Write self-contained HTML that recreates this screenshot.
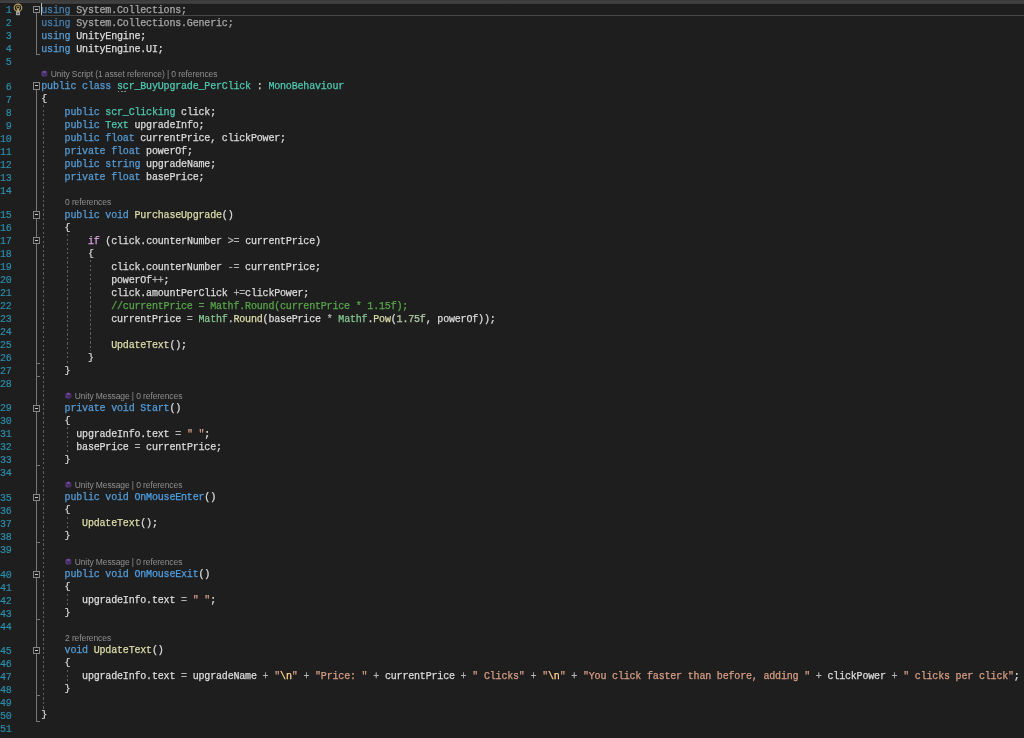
<!DOCTYPE html>
<html><head><meta charset="utf-8"><title>scr_BuyUpgrade_PerClick.cs</title>
<style>
html,body{margin:0;padding:0;background:#1e1e1e;overflow:hidden}
body{width:1024px;height:738px;position:relative;font-family:"Liberation Mono",monospace}
.l,.n{position:absolute;white-space:pre;font-size:10.0px;line-height:13.0px;height:13.0px;letter-spacing:-0.1785px;font-family:"Liberation Mono",monospace}
.l{left:41.3px;color:#dcdcdc;-webkit-text-stroke:0.25px}
.n{left:0;width:11.7px;text-align:right;color:#2b91af;-webkit-text-stroke:0.15px}
.k{color:#569cd6}.t{color:#4ec9b0}.m{color:#dcdcaa}.c{color:#d8a0df}.s{color:#d69d85}.e{color:#ffd68f}
.nn{color:#b5cea8}.o{color:#b4b4b4}.cm{color:#57a64a}.st{color:#86c691}.u{color:#4f9fe3}.f{color:#a8a8a8}.fk{color:#477fae}
.cl{position:absolute;white-space:pre;font-family:"Liberation Sans",sans-serif;font-size:8.5px;line-height:11.6px;height:11.6px;color:#8f8f8f;letter-spacing:-0.1px}
.g{position:absolute;width:1px;background:repeating-linear-gradient(to bottom,#5e5e5e 0,#5e5e5e 2.4px,transparent 2.4px,transparent 4.52px)}
.v{position:absolute;background:#767676;width:1px}
.h{position:absolute;background:#767676;height:1px}
.b{position:absolute;width:5.1px;height:5.3px;border:1px solid #858585;background:#1e1e1e;box-sizing:content-box}
.b i{position:absolute;left:0.8px;top:2.15px;width:3.5px;height:1px;background:#c8c8c8}

</style></head><body><div id="w" style="position:absolute;left:0;top:0;width:1024px;height:738px;filter:blur(0.3px)">
<div style="position:absolute;left:0;top:0;width:1024px;height:3.1px;background:linear-gradient(#393939,#434343)"></div>
<div style="position:absolute;left:41px;top:2.9px;width:983px;height:10.8px;border-top:1px solid #3a3a3a;border-bottom:1.2px solid #484848"></div>
<div style="position:absolute;left:41px;top:3.2px;width:1.1px;height:12px;background:#bcbcbc"></div>
<div class="n" style="top:4.10px">1</div>
<div class="l" style="top:3.60px"><span class="fk">using</span><span class="f"> System.Collections;</span></div>
<div class="n" style="top:17.10px">2</div>
<div class="l" style="top:16.60px"><span class="fk">using</span><span class="f"> System.Collections.Generic;</span></div>
<div class="n" style="top:30.10px">3</div>
<div class="l" style="top:29.60px"><span class="k">using</span> UnityEngine;</div>
<div class="n" style="top:43.10px">4</div>
<div class="l" style="top:42.60px"><span class="k">using</span> UnityEngine.UI;</div>
<div class="n" style="top:56.10px">5</div>
<div class="n" style="top:80.50px">6</div>
<div class="l" style="top:80.00px"><span class="k">public class </span><span class="t">scr_BuyUpgrade_PerClick</span> : <span class="t">MonoBehaviour</span></div>
<div class="n" style="top:93.50px">7</div>
<div class="l" style="top:93.00px"><span style="display:inline-block;transform:translateY(-0.45px) scaleY(0.94)">{</span></div>
<div class="n" style="top:106.50px">8</div>
<div class="l" style="top:106.00px">    <span class="k">public </span><span class="t">scr_Clicking</span> click;</div>
<div class="n" style="top:119.50px">9</div>
<div class="l" style="top:119.00px">    <span class="k">public </span><span class="t">Text</span> upgradeInfo;</div>
<div class="n" style="top:132.50px">10</div>
<div class="l" style="top:132.00px">    <span class="k">public float</span> currentPrice, clickPower;</div>
<div class="n" style="top:145.50px">11</div>
<div class="l" style="top:145.00px">    <span class="k">private float</span> powerOf;</div>
<div class="n" style="top:158.50px">12</div>
<div class="l" style="top:158.00px">    <span class="k">public string</span> upgradeName;</div>
<div class="n" style="top:171.50px">13</div>
<div class="l" style="top:171.00px">    <span class="k">private float</span> basePrice;</div>
<div class="n" style="top:184.50px">14</div>
<div class="n" style="top:209.30px">15</div>
<div class="l" style="top:208.80px">    <span class="k">public void </span><span class="m">PurchaseUpgrade</span>()</div>
<div class="n" style="top:222.30px">16</div>
<div class="l" style="top:221.80px">    <span style="display:inline-block;transform:translateY(-0.45px) scaleY(0.94)">{</span></div>
<div class="n" style="top:235.30px">17</div>
<div class="l" style="top:234.80px">        <span class="c">if</span> (click.counterNumber <span class="o">&gt;=</span> currentPrice)</div>
<div class="n" style="top:248.30px">18</div>
<div class="l" style="top:247.80px">        <span style="display:inline-block;transform:translateY(-0.45px) scaleY(0.94)">{</span></div>
<div class="n" style="top:261.30px">19</div>
<div class="l" style="top:260.80px">            click.counterNumber <span class="o">-=</span> currentPrice;</div>
<div class="n" style="top:274.30px">20</div>
<div class="l" style="top:273.80px">            powerOf<span class="o">++</span>;</div>
<div class="n" style="top:287.30px">21</div>
<div class="l" style="top:286.80px">            click.amountPerClick <span class="o">+=</span>clickPower;</div>
<div class="n" style="top:300.30px">22</div>
<div class="l" style="top:299.80px">            <span class="cm">//currentPrice = Mathf.Round(currentPrice * 1.15f);</span></div>
<div class="n" style="top:313.30px">23</div>
<div class="l" style="top:312.80px">            currentPrice <span class="o">=</span> <span class="st">Mathf</span>.<span class="m">Round</span>(basePrice <span class="o">*</span> <span class="st">Mathf</span>.<span class="m">Pow</span>(<span class="nn">1.75f</span>, powerOf));</div>
<div class="n" style="top:326.30px">24</div>
<div class="n" style="top:339.30px">25</div>
<div class="l" style="top:338.80px">            <span class="m">UpdateText</span>();</div>
<div class="n" style="top:352.30px">26</div>
<div class="l" style="top:351.80px">        <span style="display:inline-block;transform:translateY(-0.45px) scaleY(0.94)">}</span></div>
<div class="n" style="top:365.30px">27</div>
<div class="l" style="top:364.80px">    <span style="display:inline-block;transform:translateY(-0.45px) scaleY(0.94)">}</span></div>
<div class="n" style="top:378.30px">28</div>
<div class="n" style="top:402.45px">29</div>
<div class="l" style="top:401.95px">    <span class="k">private void </span><span class="u">Start</span>()</div>
<div class="n" style="top:415.45px">30</div>
<div class="l" style="top:414.95px">    <span style="display:inline-block;transform:translateY(-0.45px) scaleY(0.94)">{</span></div>
<div class="n" style="top:428.45px">31</div>
<div class="l" style="top:427.95px">      upgradeInfo.text <span class="o">=</span> <span class="s">" "</span>;</div>
<div class="n" style="top:441.45px">32</div>
<div class="l" style="top:440.95px">      basePrice <span class="o">=</span> currentPrice;</div>
<div class="n" style="top:454.45px">33</div>
<div class="l" style="top:453.95px">    <span style="display:inline-block;transform:translateY(-0.45px) scaleY(0.94)">}</span></div>
<div class="n" style="top:467.45px">34</div>
<div class="n" style="top:491.75px">35</div>
<div class="l" style="top:491.25px">    <span class="k">public void </span><span class="u">OnMouseEnter</span>()</div>
<div class="n" style="top:504.75px">36</div>
<div class="l" style="top:504.25px">    <span style="display:inline-block;transform:translateY(-0.45px) scaleY(0.94)">{</span></div>
<div class="n" style="top:517.75px">37</div>
<div class="l" style="top:517.25px">       <span class="m">UpdateText</span>();</div>
<div class="n" style="top:530.75px">38</div>
<div class="l" style="top:530.25px">    <span style="display:inline-block;transform:translateY(-0.45px) scaleY(0.94)">}</span></div>
<div class="n" style="top:543.75px">39</div>
<div class="n" style="top:568.70px">40</div>
<div class="l" style="top:568.20px">    <span class="k">public void </span><span class="u">OnMouseExit</span>()</div>
<div class="n" style="top:581.70px">41</div>
<div class="l" style="top:581.20px">    <span style="display:inline-block;transform:translateY(-0.45px) scaleY(0.94)">{</span></div>
<div class="n" style="top:594.70px">42</div>
<div class="l" style="top:594.20px">       upgradeInfo.text <span class="o">=</span> <span class="s">" "</span>;</div>
<div class="n" style="top:607.70px">43</div>
<div class="l" style="top:607.20px">    <span style="display:inline-block;transform:translateY(-0.45px) scaleY(0.94)">}</span></div>
<div class="n" style="top:620.70px">44</div>
<div class="n" style="top:644.85px">45</div>
<div class="l" style="top:644.35px">    <span class="k">void </span><span class="m">UpdateText</span>()</div>
<div class="n" style="top:657.85px">46</div>
<div class="l" style="top:657.35px">    <span style="display:inline-block;transform:translateY(-0.45px) scaleY(0.94)">{</span></div>
<div class="n" style="top:670.85px">47</div>
<div class="l" style="top:670.35px">       upgradeInfo.text <span class="o">=</span> upgradeName <span class="o">+</span> <span class="s">"</span><span class="e">\n</span><span class="s">"</span> <span class="o">+</span> <span class="s">"Price: "</span> <span class="o">+</span> currentPrice <span class="o">+</span> <span class="s">" Clicks"</span> <span class="o">+</span> <span class="s">"</span><span class="e">\n</span><span class="s">"</span> <span class="o">+</span> <span class="s">"You click faster than before, adding "</span> <span class="o">+</span> clickPower <span class="o">+</span> <span class="s">" clicks per click"</span>;</div>
<div class="n" style="top:683.85px">48</div>
<div class="l" style="top:683.35px">    <span style="display:inline-block;transform:translateY(-0.45px) scaleY(0.94)">}</span></div>
<div class="n" style="top:696.85px">49</div>
<div class="n" style="top:709.85px">50</div>
<div class="l" style="top:709.35px"><span style="display:inline-block;transform:translateY(-0.45px) scaleY(0.94)">}</span></div>
<div class="n" style="top:722.85px">51</div>
<svg style="position:absolute;left:40.9px;top:69.80px" width="7" height="8" viewBox="0 0 7 8"><path d="M3.4 0.4 L6.4 2.1 L3.4 3.8 L0.4 2.1 Z" fill="#7149a1"/><path d="M0.4 2.1 L3.4 3.8 V7.2 L0.4 5.5 Z" fill="#553a78"/><path d="M6.4 2.1 L3.4 3.8 V7.2 L6.4 5.5 Z" fill="#4a3269"/><path d="M0.4 2.1 L3.4 3.8 L6.4 2.1 M3.4 3.8 V7.2" stroke="#3a2853" stroke-width="0.5" fill="none"/></svg>
<div class="cl" style="left:50.7px;top:68.60px">Unity Script (1 asset reference) | 0 references</div>
<div class="cl" style="left:65px;top:197.40px">0 references</div>
<svg style="position:absolute;left:64.9px;top:391.75px" width="7" height="8" viewBox="0 0 7 8"><path d="M3.4 0.4 L6.4 2.1 L3.4 3.8 L0.4 2.1 Z" fill="#7149a1"/><path d="M0.4 2.1 L3.4 3.8 V7.2 L0.4 5.5 Z" fill="#553a78"/><path d="M6.4 2.1 L3.4 3.8 V7.2 L6.4 5.5 Z" fill="#4a3269"/><path d="M0.4 2.1 L3.4 3.8 L6.4 2.1 M3.4 3.8 V7.2" stroke="#3a2853" stroke-width="0.5" fill="none"/></svg>
<div class="cl" style="left:74.7px;top:390.55px">Unity Message | 0 references</div>
<svg style="position:absolute;left:64.9px;top:481.05px" width="7" height="8" viewBox="0 0 7 8"><path d="M3.4 0.4 L6.4 2.1 L3.4 3.8 L0.4 2.1 Z" fill="#7149a1"/><path d="M0.4 2.1 L3.4 3.8 V7.2 L0.4 5.5 Z" fill="#553a78"/><path d="M6.4 2.1 L3.4 3.8 V7.2 L6.4 5.5 Z" fill="#4a3269"/><path d="M0.4 2.1 L3.4 3.8 L6.4 2.1 M3.4 3.8 V7.2" stroke="#3a2853" stroke-width="0.5" fill="none"/></svg>
<div class="cl" style="left:74.7px;top:479.85px">Unity Message | 0 references</div>
<svg style="position:absolute;left:64.9px;top:558.00px" width="7" height="8" viewBox="0 0 7 8"><path d="M3.4 0.4 L6.4 2.1 L3.4 3.8 L0.4 2.1 Z" fill="#7149a1"/><path d="M0.4 2.1 L3.4 3.8 V7.2 L0.4 5.5 Z" fill="#553a78"/><path d="M6.4 2.1 L3.4 3.8 V7.2 L6.4 5.5 Z" fill="#4a3269"/><path d="M0.4 2.1 L3.4 3.8 L6.4 2.1 M3.4 3.8 V7.2" stroke="#3a2853" stroke-width="0.5" fill="none"/></svg>
<div class="cl" style="left:74.7px;top:556.80px">Unity Message | 0 references</div>
<div class="cl" style="left:65px;top:632.95px">2 references</div>
<div class="v" style="left:36.3px;top:12.80px;height:41.60px"></div>
<div class="h" style="left:36.3px;top:53.90px;width:4px"></div>
<div class="v" style="left:36.3px;top:89.20px;height:631.95px"></div>
<div class="h" style="left:36.3px;top:720.65px;width:4px"></div>
<div class="h" style="left:36.3px;top:363.10px;width:4px"></div>
<div class="h" style="left:36.3px;top:376.10px;width:4px"></div>
<div class="h" style="left:36.3px;top:465.25px;width:4px"></div>
<div class="h" style="left:36.3px;top:541.55px;width:4px"></div>
<div class="h" style="left:36.3px;top:618.50px;width:4px"></div>
<div class="h" style="left:36.3px;top:694.65px;width:4px"></div>
<div class="b" style="left:33px;top:5.90px"><i></i></div>
<div class="b" style="left:33px;top:82.30px"><i></i></div>
<div class="b" style="left:33px;top:211.25px"><i></i></div>
<div class="b" style="left:33px;top:237.00px"><i></i></div>
<div class="b" style="left:33px;top:404.95px"><i></i></div>
<div class="b" style="left:33px;top:494.20px"><i></i></div>
<div class="b" style="left:33px;top:570.60px"><i></i></div>
<div class="b" style="left:33px;top:646.65px"><i></i></div>
<div class="g" style="left:43.2px;top:105.40px;height:603.35px"></div>
<div class="g" style="left:66.6px;top:234.20px;height:130.00px"></div>
<div class="g" style="left:90px;top:260.20px;height:91.00px"></div>
<div class="g" style="left:66.6px;top:427.35px;height:26.00px"></div>
<div class="g" style="left:66.6px;top:516.65px;height:13.00px"></div>
<div class="g" style="left:66.6px;top:593.60px;height:13.00px"></div>
<div class="g" style="left:66.6px;top:669.75px;height:13.00px"></div>
<div style="position:absolute;left:117.90px;top:90.50px;width:1.4px;height:1.4px;background:#8c8c8c"></div>
<div style="position:absolute;left:121.15px;top:90.50px;width:1.4px;height:1.4px;background:#8c8c8c"></div>
<div style="position:absolute;left:124.40px;top:90.50px;width:1.4px;height:1.4px;background:#8c8c8c"></div>
<svg style="position:absolute;left:13px;top:2.5px" width="10" height="13" viewBox="0 0 10 13"><circle cx="5" cy="4.8" r="3.75" fill="none" stroke="#bda466" stroke-width="1.15"/><circle cx="5" cy="4.5" r="1.55" fill="none" stroke="#bda466" stroke-width="0.95"/><path d="M4 5.8 H6 L6.5 8.4 H3.5 Z" fill="#bda466"/><rect x="3.1" y="8.5" width="3.8" height="3.7" fill="#b2b2b2"/><rect x="4.2" y="9.6" width="1.6" height="1.5" fill="#444"/></svg>
</div></body></html>
